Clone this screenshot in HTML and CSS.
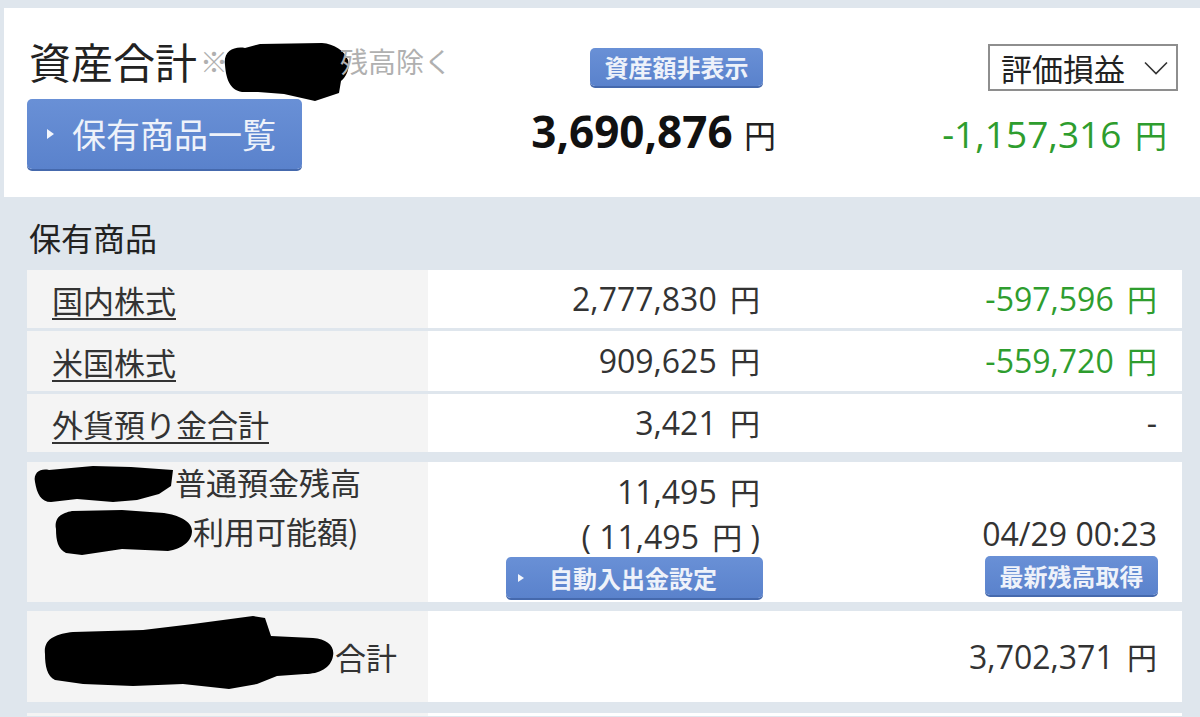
FILE: index.html
```html
<!DOCTYPE html>
<html lang="ja">
<head>
<meta charset="utf-8">
<title>資産合計</title>
<link rel="stylesheet" href="styles.css">
</head>
<body>
<div class="page">
  <section class="summary">
    <div class="sum-left">
      <div class="title">
        <span class="title-main">資産合計</span>
        <span class="note">※<svg class="blob blob-title" width="128" height="58" viewBox="0 0 128 58"><path d="M3,22 C1,9 11,3 23,5 L38,1 L100,0 C112,1 122,7 126,17 C128,25 125,33 119,38 L117,50 L93,58 L62,51 L36,49 L20,49 C8,47 4,36 3,22 Z" fill="#000"/></svg>残高除く</span>
      </div>
      <a class="btn btn-lg"><span class="tri"></span>保有商品一覧</a>
    </div>
    <div class="sum-mid">
      <a class="btn btn-hide">資産額非表示</a>
      <div class="total num">3,690,876 <span class="yen">円</span></div>
    </div>
    <div class="sum-right">
      <div class="select">評価損益<svg class="chev" width="24" height="14" viewBox="0 0 24 14"><polyline points="1,1.5 12,12.5 23,1.5" fill="none" stroke="#333" stroke-width="1.6"/></svg></div>
      <div class="gain num green">-1,157,316 <span class="yen">円</span></div>
    </div>
  </section>

  <section class="holdings">
    <h2 class="sec-title">保有商品</h2>
    <div class="tbl">
      <div class="row">
        <div class="c1"><a class="link">国内株式</a></div>
        <div class="c2 num"><span class="v">2,777,830 <span class="yen">円</span></span></div>
        <div class="c3 num green"><span class="v">-597,596 <span class="yen">円</span></span></div>
      </div>
      <div class="row row-2">
        <div class="c1"><a class="link">米国株式</a></div>
        <div class="c2 num"><span class="v">909,625 <span class="yen">円</span></span></div>
        <div class="c3 num green"><span class="v">-559,720 <span class="yen">円</span></span></div>
      </div>
      <div class="row">
        <div class="c1"><a class="link">外貨預り金合計</a></div>
        <div class="c2 num"><span class="v">3,421 <span class="yen">円</span></span></div>
        <div class="c3 num"><span class="v">-</span></div>
      </div>
      <div class="row row-bank">
        <div class="c1 bank-label">
          <div class="bl-line"><svg class="blob blob-b1" width="142" height="40" viewBox="0 0 142 40"><path d="M2,18 C0,8 8,4 16,6 L60,2 L98,3 L140,6 L138,22 L126,30 L104,36 L80,38 L44,35 L18,38 C8,38 4,30 2,18 Z" fill="#000"/></svg><span>普通預金残高</span></div>
          <div class="bl-line bl-line2"><svg class="blob blob-b2" width="141" height="49" viewBox="0 0 141 49"><path d="M4,22 C2,10 10,6 20,4 L70,3 L112,6 C126,8 140,14 140,24 C140,34 130,42 116,44 L70,42 L30,48 L14,46 C6,42 4,34 4,22 Z" fill="#000"/></svg><span>利用可能額)</span></div>
        </div>
        <div class="c2 bank-mid">
          <div class="bm-line num">11,495 <span class="yen">円</span></div>
          <div class="bm-line num">( 11,495 <span class="yen">円</span> )</div>
          <a class="btn btn-auto"><span class="tri tri-sm"></span>自動入出金設定</a>
        </div>
        <div class="c3 bank-right">
          <div class="bm-line num date">04/29 00:23</div>
          <a class="btn btn-refresh">最新残高取得</a>
        </div>
      </div>
      <div class="row row-total">
        <div class="c1 total-label"><svg class="blob blob-t" width="292" height="75" viewBox="0 0 292 75"><path d="M2,40 C0,24 14,20 30,18 L100,16 L150,10 L210,2 L222,4 L228,22 L270,24 C284,25 292,32 290,42 C288,54 276,60 262,60 L234,62 L214,70 L186,75 L140,70 L90,72 L40,70 L12,66 C4,62 2,52 2,40 Z" fill="#000"/></svg><span>合計</span></div>
        <div class="c2"></div>
        <div class="c3 num"><span class="v">3,702,371 <span class="yen">円</span></span></div>
      </div>
      <div class="row row-next">
        <div class="c1"></div>
        <div class="c2"></div>
        <div class="c3"></div>
      </div>
    </div>
  </section>
</div>
</body>
</html>
```

FILE: styles.css
```css
* {
  box-sizing: border-box;
  margin: 0;
  padding: 0;
}

html, body {
  width: 1200px;
  height: 717px;
  overflow: hidden;
}

body {
  background: #dfe6ed;
  font-family: "Noto Sans CJK JP", sans-serif;
  color: #333;
}

.page {
  padding-top: 8px;
  padding-left: 4px;
}

/* ---------- summary panel ---------- */
.summary {
  background: #fff;
  height: 189px;
  display: flex;
  padding: 0 22px 0 23px;
}

.sum-left {
  width: 480px;
  display: flex;
  flex-direction: column;
  align-items: flex-start;
}

.title {
  margin-top: 32px;
  height: 42px;
  display: flex;
  align-items: center;
}

.title-main {
  font-size: 42px;
  line-height: 1;
  color: #222;
  margin-left: 2px;
}

.note {
  font-size: 28px;
  line-height: 1;
  color: #b0b0b0;
  display: flex;
  align-items: center;
  margin-left: 3px;
}

.blob {
  display: block;
  flex-shrink: 0;
}

.blob-title {
  margin-top: 22px;
  margin-left: -6px;
  margin-right: -10px;
}

.btn {
  display: flex;
  align-items: center;
  color: #eef2fa;
  background: linear-gradient(#6990d6, #5a82cc);
  border-radius: 5px;
  box-shadow: 0 2px 0 #4569ad;
  text-decoration: none;
  white-space: nowrap;
}

.btn-lg {
  margin-top: 17px;
  width: 275px;
  height: 70px;
  font-size: 34px;
  line-height: 1;
  padding-left: 20px;
}

.tri {
  width: 0;
  height: 0;
  border-top: 5px solid transparent;
  border-bottom: 5px solid transparent;
  border-left: 7px solid #f3f6fc;
  margin-right: 18px;
}

.tri-sm {
  border-top-width: 4px;
  border-bottom-width: 4px;
  border-left-width: 6px;
  margin-right: 25px;
}

.sum-mid {
  width: 269px;
  display: flex;
  flex-direction: column;
  align-items: flex-end;
}

.btn-hide {
  margin-top: 40px;
  margin-right: 13px;
  width: 173px;
  height: 38px;
  justify-content: center;
  font-size: 24px;
  font-weight: 700;
  line-height: 1;
}

.num {
  font-family: "Open Sans", "Noto Sans CJK JP", sans-serif;
}

.total {
  margin-top: 20px;
  font-size: 44px;
  font-weight: 700;
  line-height: 50px;
  color: #111;
}

.total .yen {
  font-size: 32px;
  font-weight: 400;
  margin-left: 0;
  color: #222;
}

.sum-right {
  flex: 1;
  display: flex;
  flex-direction: column;
  align-items: flex-end;
}

.select {
  margin-top: 36px;
  width: 190px;
  height: 47px;
  border: 2px solid #8e8e8e;
  display: flex;
  align-items: center;
  justify-content: space-between;
  padding: 0 8px 0 11px;
  font-size: 31px;
  line-height: 1;
  color: #222;
}

.chev {
  display: block;
}

.gain {
  margin-top: 21px;
  margin-right: 11px;
  font-size: 37px;
  line-height: 44px;
}

.gain .yen {
  font-size: 32px;
  margin-left: 4px;
}

.green {
  color: #2e9d2e;
}

/* ---------- holdings ---------- */
.holdings {
  padding: 0 18px 0 23px;
}

.sec-title {
  margin-top: 24px;
  font-size: 32px;
  font-weight: 400;
  line-height: 1;
  color: #222;
  padding-left: 2px;
}

.tbl {
  margin-top: 17px;
  display: flex;
  flex-direction: column;
  gap: 3px;
}

.row {
  display: grid;
  grid-template-columns: 401px 357px 1fr;
  height: 58px;
}

.row-2 {
  height: 60px;
}

.c1 {
  background: #f4f4f4;
  display: flex;
  align-items: center;
  padding-left: 25px;
  font-size: 31px;
  line-height: 1;
  color: #333;
}

.c2, .c3 {
  background: #fff;
  display: flex;
  align-items: center;
  justify-content: flex-end;
  padding-right: 25px;
  font-size: 32px;
  line-height: 1;
  color: #333;
}

.v {
  white-space: nowrap;
}

.c3.green {
  color: #2e9d2e;
}

.yen {
  font-family: "Noto Sans CJK JP", sans-serif;
  font-size: 30px;
  margin-left: 5px;
}

.link {
  color: #333;
  text-decoration: underline;
  text-decoration-thickness: 2px;
  text-underline-offset: 5px;
}

/* bank row */
.row-bank {
  margin-top: 7px;
  height: 140px;
}

.bank-label {
  flex-direction: column;
  align-items: flex-start;
  justify-content: flex-start;
  padding-left: 6px;
}

.bl-line {
  display: flex;
  align-items: flex-start;
  height: 40px;
  line-height: 40px;
  white-space: nowrap;
}

.blob-b1 {
  margin-top: 2px;
}

.bl-line2 {
  margin-top: 9px;
  margin-left: 19px;
}

.blob-b2 {
  margin-top: -4px;
}

.bank-mid {
  flex-direction: column;
  align-items: flex-end;
  justify-content: flex-start;
  padding-top: 11px;
}

.bm-line {
  line-height: 36px;
  height: 36px;
  white-space: nowrap;
}

.bm-line + .bm-line {
  margin-top: 9px;
}

.btn-auto {
  margin-top: 3px;
  width: 257px;
  height: 41px;
  margin-right: -3px;
  padding-left: 12px;
  font-size: 24px;
  font-weight: 700;
  line-height: 1;
}

.bank-right {
  flex-direction: column;
  align-items: flex-end;
  justify-content: flex-end;
  padding-bottom: 7px;
}

.date {
  margin-bottom: 4px;
}

.btn-refresh {
  width: 173px;
  height: 39px;
  margin-right: -1px;
  justify-content: center;
  font-size: 24px;
  font-weight: 700;
  line-height: 1;
}

/* total row */
.row-total {
  margin-top: 6px;
  height: 91px;
}

.total-label {
  padding-left: 16px;
}

.blob-t {
  margin-bottom: 10px;
}

.total-label span {
  margin-left: 0;
}

.row-next {
  margin-top: 8px;
  height: 3px;
}
```
